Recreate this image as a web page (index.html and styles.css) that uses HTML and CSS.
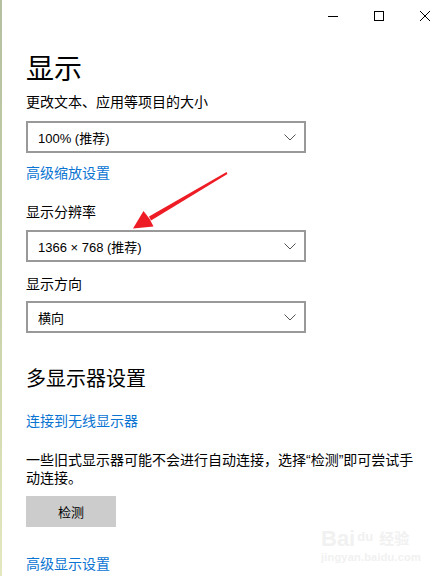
FILE: index.html
```html
<!DOCTYPE html>
<html lang="zh-CN">
<head>
<meta charset="utf-8">
<title>显示</title>
<link rel="stylesheet" href="styles.css">
</head>
<body>
<div class="app">
  <div class="edge"></div>
  <div class="window">
    <div class="titlebar">
      <div class="controls">
        <span class="ctl"><svg width="10" height="10" viewBox="0 0 10 10"><path d="M0 5.5H10" stroke="#000" stroke-width="1"/></svg></span>
        <span class="ctl"><svg width="10" height="10" viewBox="0 0 10 10"><rect x="0.5" y="0.5" width="9" height="9" fill="none" stroke="#000" stroke-width="1"/></svg></span>
        <span class="ctl"><svg width="10" height="10" viewBox="0 0 10 10"><path d="M0 0L10 10M10 0L0 10" stroke="#000" stroke-width="1"/></svg></span>
      </div>
    </div>
    <main class="content">
      <h1 class="title">显示</h1>
      <div class="label sub">更改文本、应用等项目的大小</div>
      <div class="select s1"><span>100% (推荐)</span><svg class="chev" width="12" height="7" viewBox="0 0 12 7"><path d="M0.5 0.5L6 6L11.5 0.5" fill="none" stroke="#555" stroke-width="1"/></svg></div>
      <a class="link l1">高级缩放设置</a>
      <div class="label lab2">显示分辨率</div>
      <div class="select s2"><span>1366 × 768 (推荐)</span><svg class="chev" width="12" height="7" viewBox="0 0 12 7"><path d="M0.5 0.5L6 6L11.5 0.5" fill="none" stroke="#555" stroke-width="1"/></svg></div>
      <div class="label lab3">显示方向</div>
      <div class="select s3"><span>横向</span><svg class="chev" width="12" height="7" viewBox="0 0 12 7"><path d="M0.5 0.5L6 6L11.5 0.5" fill="none" stroke="#555" stroke-width="1"/></svg></div>
      <h2 class="section">多显示器设置</h2>
      <a class="link l2">连接到无线显示器</a>
      <p class="para">一些旧式显示器可能不会进行自动连接，选择“检测”即可尝试手动连接。</p>
      <button class="btn">检测</button>
      <a class="link l3">高级显示设置</a>
    </main>
  </div>
</div>
<svg class="arrow" width="438" height="576" viewBox="0 0 438 576">
  <polygon points="227.4,173.9 226.6,172.1 149,216.5 151,220.5" fill="#ee1c25"/>
  <polygon points="133,228.5 143.5,211 149.5,218.8 153.5,226.5" fill="#ee1c25"/>
</svg>
<div class="watermark">
  <div class="wm-top"><span class="wm-bai">Bai</span><span class="wm-du">du</span><span class="wm-jy">经验</span></div>
  <div class="wm-url">jingyan.baidu.com</div>
</div>
</body>
</html>
```

FILE: styles.css
```css
html, body {
  margin: 0;
  padding: 0;
  background: #fff;
  overflow: hidden;
}
body {
  width: 438px;
  height: 576px;
  position: relative;
  font-family: "Liberation Sans", "Noto Sans CJK SC", sans-serif;
  color: #000;
}
.app {
  display: flex;
  height: 576px;
}
.edge {
  width: 2px;
  flex: none;
  background: linear-gradient(to bottom, #b4c0a0 0%, #c6d0a8 50%, #e4e8c0 100%);
}
.window {
  flex: 1;
  display: flex;
  flex-direction: column;
}
.titlebar {
  height: 32px;
  display: flex;
  justify-content: flex-end;
  margin-right: -10px;
}
.controls {
  display: flex;
}
.ctl {
  width: 46px;
  height: 32px;
  display: flex;
  align-items: center;
  justify-content: center;
}
.content {
  padding-left: 24px;
  display: flex;
  flex-direction: column;
  align-items: flex-start;
}
.title {
  margin: 18px 0 0;
  font-size: 28px;
  font-weight: normal;
  line-height: 40px;
}
.label {
  font-size: 14px;
  line-height: 20px;
}
.sub { margin-top: 2px; }
.select {
  box-sizing: border-box;
  width: 280px;
  height: 32px;
  border: 2px solid #999;
  display: flex;
  align-items: center;
  justify-content: space-between;
  padding: 0 8px 0 10px;
  font-size: 13px;
}
.chev { display: block; }
.s1 { margin-top: 9px; }
.link {
  color: #0a74d2;
  font-size: 14px;
  line-height: 20px;
  text-decoration: none;
}
.l1 { margin-top: 10px; }
.lab2 { margin-top: 19px; }
.s2 { margin-top: 8px; }
.lab3 { margin-top: 12px; }
.s3 { margin-top: 7px; }
.section {
  margin: 32px 0 0;
  font-size: 20px;
  font-weight: normal;
  line-height: 28px;
}
.l2 { margin-top: 18px; }
.para {
  margin: 20px 0 0;
  width: 394px;
  font-size: 14px;
  line-height: 18px;
}
.btn {
  margin-top: 9px;
  width: 90px;
  height: 31px;
  border: none;
  background: #ccc;
  font-family: inherit;
  font-size: 13px;
  color: #000;
  padding: 0;
}
.l3 { margin-top: 27px; }
.arrow {
  position: absolute;
  left: 0;
  top: 0;
  pointer-events: none;
}
.watermark {
  position: absolute;
  left: 321px;
  top: 526px;
  color: #f1f1f1;
  font-family: "Liberation Sans", "Noto Sans CJK SC", sans-serif;
  pointer-events: none;
}
.wm-top {
  display: flex;
  align-items: flex-end;
  line-height: 22px;
}
.wm-bai {
  font-size: 22px;
  font-weight: bold;
}
.wm-du {
  font-size: 13px;
  font-weight: bold;
  margin: 0 6px 2px 2px;
}
.wm-jy {
  font-size: 15px;
  font-weight: bold;
}
.wm-url {
  font-size: 11px;
  line-height: 14px;
  font-weight: bold;
  letter-spacing: 0.2px;
}
```
